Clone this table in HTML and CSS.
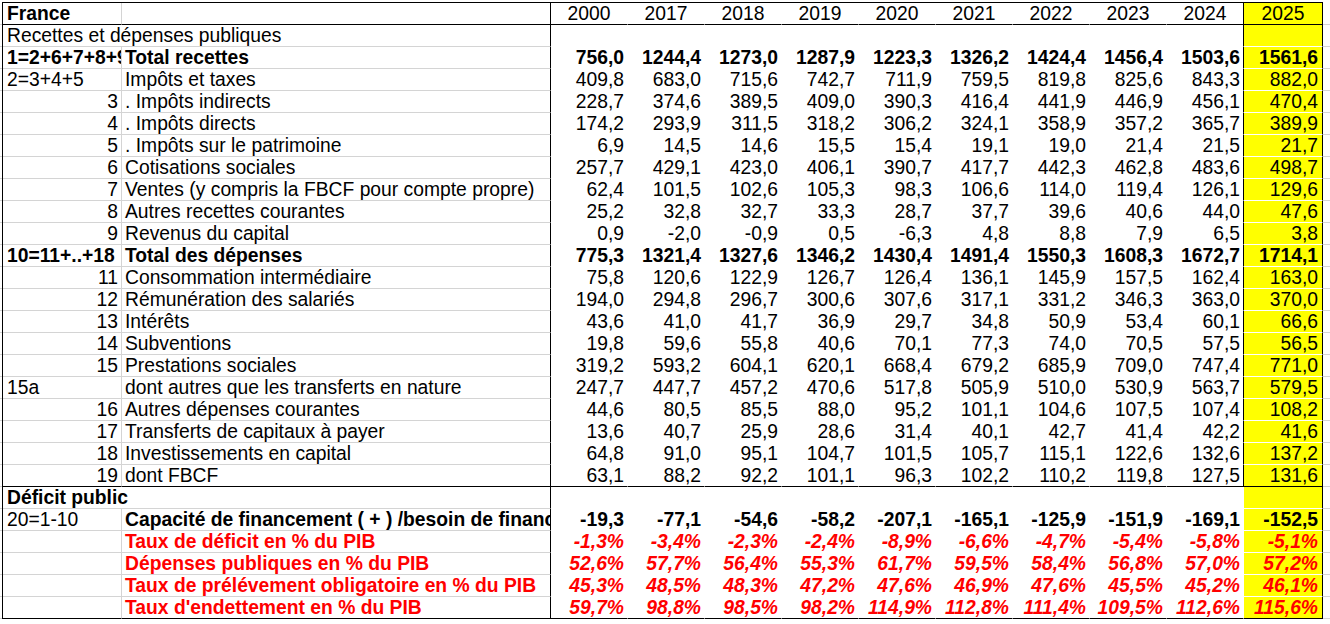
FILE: index.html
```html
<!DOCTYPE html>
<html lang="fr">
<head>
<meta charset="utf-8">
<title>France – Recettes et dépenses publiques</title>
<link rel="stylesheet" href="styles.css">
</head>
<body>
<table class="sheet">
<colgroup>
<col class="c-a"><col class="c-b">
<col class="c-n"><col class="c-n"><col class="c-n"><col class="c-n"><col class="c-n"><col class="c-n"><col class="c-n"><col class="c-n"><col class="c-n"><col class="c-y">
</colgroup>
<tbody>
<tr class="hd"><td class="a bold">France</td><td class="b"></td><td class="n">2000</td><td class="n">2017</td><td class="n">2018</td><td class="n">2019</td><td class="n">2020</td><td class="n">2021</td><td class="n">2022</td><td class="n">2023</td><td class="n e">2024</td><td class="n y">2025</td></tr>
<tr><td class="ab" colspan="2">Recettes et dépenses publiques</td><td class="n"></td><td class="n"></td><td class="n"></td><td class="n"></td><td class="n"></td><td class="n"></td><td class="n"></td><td class="n"></td><td class="n e"></td><td class="n y"></td></tr>
<tr class="bold"><td class="a">1=2+6+7+8+9</td><td class="b">Total recettes</td><td class="n">756,0</td><td class="n">1244,4</td><td class="n">1273,0</td><td class="n">1287,9</td><td class="n">1223,3</td><td class="n">1326,2</td><td class="n">1424,4</td><td class="n">1456,4</td><td class="n e">1503,6</td><td class="n y">1561,6</td></tr>
<tr><td class="a">2=3+4+5</td><td class="b">Impôts et taxes</td><td class="n">409,8</td><td class="n">683,0</td><td class="n">715,6</td><td class="n">742,7</td><td class="n">711,9</td><td class="n">759,5</td><td class="n">819,8</td><td class="n">825,6</td><td class="n e">843,3</td><td class="n y">882,0</td></tr>
<tr><td class="a r">3</td><td class="b">. Impôts indirects</td><td class="n">228,7</td><td class="n">374,6</td><td class="n">389,5</td><td class="n">409,0</td><td class="n">390,3</td><td class="n">416,4</td><td class="n">441,9</td><td class="n">446,9</td><td class="n e">456,1</td><td class="n y">470,4</td></tr>
<tr><td class="a r">4</td><td class="b">. Impôts directs</td><td class="n">174,2</td><td class="n">293,9</td><td class="n">311,5</td><td class="n">318,2</td><td class="n">306,2</td><td class="n">324,1</td><td class="n">358,9</td><td class="n">357,2</td><td class="n e">365,7</td><td class="n y">389,9</td></tr>
<tr><td class="a r">5</td><td class="b">. Impôts sur le patrimoine</td><td class="n">6,9</td><td class="n">14,5</td><td class="n">14,6</td><td class="n">15,5</td><td class="n">15,4</td><td class="n">19,1</td><td class="n">19,0</td><td class="n">21,4</td><td class="n e">21,5</td><td class="n y">21,7</td></tr>
<tr><td class="a r">6</td><td class="b">Cotisations sociales</td><td class="n">257,7</td><td class="n">429,1</td><td class="n">423,0</td><td class="n">406,1</td><td class="n">390,7</td><td class="n">417,7</td><td class="n">442,3</td><td class="n">462,8</td><td class="n e">483,6</td><td class="n y">498,7</td></tr>
<tr><td class="a r">7</td><td class="b">Ventes (y compris la FBCF pour compte propre)</td><td class="n">62,4</td><td class="n">101,5</td><td class="n">102,6</td><td class="n">105,3</td><td class="n">98,3</td><td class="n">106,6</td><td class="n">114,0</td><td class="n">119,4</td><td class="n e">126,1</td><td class="n y">129,6</td></tr>
<tr><td class="a r">8</td><td class="b">Autres recettes courantes</td><td class="n">25,2</td><td class="n">32,8</td><td class="n">32,7</td><td class="n">33,3</td><td class="n">28,7</td><td class="n">37,7</td><td class="n">39,6</td><td class="n">40,6</td><td class="n e">44,0</td><td class="n y">47,6</td></tr>
<tr><td class="a r">9</td><td class="b">Revenus du capital</td><td class="n">0,9</td><td class="n">-2,0</td><td class="n">-0,9</td><td class="n">0,5</td><td class="n">-6,3</td><td class="n">4,8</td><td class="n">8,8</td><td class="n">7,9</td><td class="n e">6,5</td><td class="n y">3,8</td></tr>
<tr class="bold"><td class="a">10=11+..+18</td><td class="b">Total des dépenses</td><td class="n">775,3</td><td class="n">1321,4</td><td class="n">1327,6</td><td class="n">1346,2</td><td class="n">1430,4</td><td class="n">1491,4</td><td class="n">1550,3</td><td class="n">1608,3</td><td class="n e">1672,7</td><td class="n y">1714,1</td></tr>
<tr><td class="a r">11</td><td class="b">Consommation intermédiaire</td><td class="n">75,8</td><td class="n">120,6</td><td class="n">122,9</td><td class="n">126,7</td><td class="n">126,4</td><td class="n">136,1</td><td class="n">145,9</td><td class="n">157,5</td><td class="n e">162,4</td><td class="n y">163,0</td></tr>
<tr><td class="a r">12</td><td class="b">Rémunération des salariés</td><td class="n">194,0</td><td class="n">294,8</td><td class="n">296,7</td><td class="n">300,6</td><td class="n">307,6</td><td class="n">317,1</td><td class="n">331,2</td><td class="n">346,3</td><td class="n e">363,0</td><td class="n y">370,0</td></tr>
<tr><td class="a r">13</td><td class="b">Intérêts</td><td class="n">43,6</td><td class="n">41,0</td><td class="n">41,7</td><td class="n">36,9</td><td class="n">29,7</td><td class="n">34,8</td><td class="n">50,9</td><td class="n">53,4</td><td class="n e">60,1</td><td class="n y">66,6</td></tr>
<tr><td class="a r">14</td><td class="b">Subventions</td><td class="n">19,8</td><td class="n">59,6</td><td class="n">55,8</td><td class="n">40,6</td><td class="n">70,1</td><td class="n">77,3</td><td class="n">74,0</td><td class="n">70,5</td><td class="n e">57,5</td><td class="n y">56,5</td></tr>
<tr><td class="a r">15</td><td class="b">Prestations sociales</td><td class="n">319,2</td><td class="n">593,2</td><td class="n">604,1</td><td class="n">620,1</td><td class="n">668,4</td><td class="n">679,2</td><td class="n">685,9</td><td class="n">709,0</td><td class="n e">747,4</td><td class="n y">771,0</td></tr>
<tr><td class="a">15a</td><td class="b">dont autres que les transferts en nature</td><td class="n">247,7</td><td class="n">447,7</td><td class="n">457,2</td><td class="n">470,6</td><td class="n">517,8</td><td class="n">505,9</td><td class="n">510,0</td><td class="n">530,9</td><td class="n e">563,7</td><td class="n y">579,5</td></tr>
<tr><td class="a r">16</td><td class="b">Autres dépenses courantes</td><td class="n">44,6</td><td class="n">80,5</td><td class="n">85,5</td><td class="n">88,0</td><td class="n">95,2</td><td class="n">101,1</td><td class="n">104,6</td><td class="n">107,5</td><td class="n e">107,4</td><td class="n y">108,2</td></tr>
<tr><td class="a r">17</td><td class="b">Transferts de capitaux à payer</td><td class="n">13,6</td><td class="n">40,7</td><td class="n">25,9</td><td class="n">28,6</td><td class="n">31,4</td><td class="n">40,1</td><td class="n">42,7</td><td class="n">41,4</td><td class="n e">42,2</td><td class="n y">41,6</td></tr>
<tr><td class="a r">18</td><td class="b">Investissements en capital</td><td class="n">64,8</td><td class="n">91,0</td><td class="n">95,1</td><td class="n">104,7</td><td class="n">101,5</td><td class="n">105,7</td><td class="n">115,1</td><td class="n">122,6</td><td class="n e">132,6</td><td class="n y">137,2</td></tr>
<tr class="sep"><td class="a r">19</td><td class="b">dont FBCF</td><td class="n">63,1</td><td class="n">88,2</td><td class="n">92,2</td><td class="n">101,1</td><td class="n">96,3</td><td class="n">102,2</td><td class="n">110,2</td><td class="n">119,8</td><td class="n e">127,5</td><td class="n y">131,6</td></tr>
<tr><td class="ab bold" colspan="2">Déficit public</td><td class="n"></td><td class="n"></td><td class="n"></td><td class="n"></td><td class="n"></td><td class="n"></td><td class="n"></td><td class="n"></td><td class="n"></td><td class="n y"></td></tr>
<tr class="bold"><td class="a normal">20=1-10</td><td class="b">Capacité de financement ( + ) /besoin de financement ( - )</td><td class="n">-19,3</td><td class="n">-77,1</td><td class="n">-54,6</td><td class="n">-58,2</td><td class="n">-207,1</td><td class="n">-165,1</td><td class="n">-125,9</td><td class="n">-151,9</td><td class="n">-169,1</td><td class="n y">-152,5</td></tr>
<tr class="pct"><td class="a"></td><td class="b">Taux de déficit en % du PIB</td><td class="n">-1,3%</td><td class="n">-3,4%</td><td class="n">-2,3%</td><td class="n">-2,4%</td><td class="n">-8,9%</td><td class="n">-6,6%</td><td class="n">-4,7%</td><td class="n">-5,4%</td><td class="n">-5,8%</td><td class="n y">-5,1%</td></tr>
<tr class="pct"><td class="a"></td><td class="b">Dépenses publiques en % du PIB</td><td class="n">52,6%</td><td class="n">57,7%</td><td class="n">56,4%</td><td class="n">55,3%</td><td class="n">61,7%</td><td class="n">59,5%</td><td class="n">58,4%</td><td class="n">56,8%</td><td class="n">57,0%</td><td class="n y">57,2%</td></tr>
<tr class="pct"><td class="a"></td><td class="b">Taux de prélévement obligatoire en % du PIB</td><td class="n">45,3%</td><td class="n">48,5%</td><td class="n">48,3%</td><td class="n">47,2%</td><td class="n">47,6%</td><td class="n">46,9%</td><td class="n">47,6%</td><td class="n">45,5%</td><td class="n">45,2%</td><td class="n y">46,1%</td></tr>
<tr class="pct last"><td class="a"></td><td class="b">Taux d'endettement en % du PIB</td><td class="n">59,7%</td><td class="n">98,8%</td><td class="n">98,5%</td><td class="n">98,2%</td><td class="n">114,9%</td><td class="n">112,8%</td><td class="n">111,4%</td><td class="n">109,5%</td><td class="n">112,6%</td><td class="n y">115,6%</td></tr>
</tbody>
</table>
</body>
</html>
```
FILE: styles.css
```css
html, body {
  margin: 0;
  height: 100%;
}
body {
  padding: 2px 0 0 2px;
  box-sizing: border-box;
  background-color: #fff;
  background-image: repeating-linear-gradient(to bottom, transparent 0, transparent 21px, #d4d4d4 21px, #d4d4d4 22px);
  background-position: 0 3px;
  font-family: "Liberation Sans", Arial, sans-serif;
  font-size: 19.3px;
  color: #000;
}
.sheet {
  border-collapse: separate;
  border-spacing: 0;
  table-layout: fixed;
  width: 1321px;
  border-left: 1px solid #000;
  border-top: 1px solid #000;
  background: #fff;
}
.c-a { width: 119px; }
.c-b { width: 429px; }
.c-n { width: 77px; }
.c-y { width: 79px; }
.sheet td {
  box-sizing: border-box;
  height: 22px;
  padding: 0 3px;
  line-height: 21px;
  white-space: nowrap;
  overflow: hidden;
  border-right: 1px solid #fff;
  border-bottom: 1px solid #fff;
  vertical-align: middle;
}
.sheet td.a {
  text-align: left;
  padding-left: 4px;
  border-right-color: #d4d4d4;
  border-bottom-color: #d4d4d4;
  text-overflow: clip;
}
.sheet td.a.r {
  text-align: right;
  padding-right: 3px;
}
.sheet td.b,
.sheet td.ab {
  border-right-color: #000;
  border-bottom-color: #d4d4d4;
}
.sheet td.ab { padding-left: 4px; }
.sheet td.n { text-align: right; padding-right: 3px; }
.sheet td.n.e { border-right-color: #000; }
.sheet td.n.y {
  background: #ffff00;
  border-right-color: #000;
  padding-right: 4px;
}
.hd td.n { text-align: center; padding: 0; }
.hd td.n.y { padding: 0; }
.sheet tr.hd td,
.sheet tr.sep td,
.sheet tr.last td { border-bottom-color: #000; }
.bold, .bold td { font-weight: bold; }
.sheet td.normal { font-weight: normal; }
.pct td.b { color: #f00; font-weight: bold; }
.pct td.n { color: #f00; font-weight: bold; font-style: italic; }
```
